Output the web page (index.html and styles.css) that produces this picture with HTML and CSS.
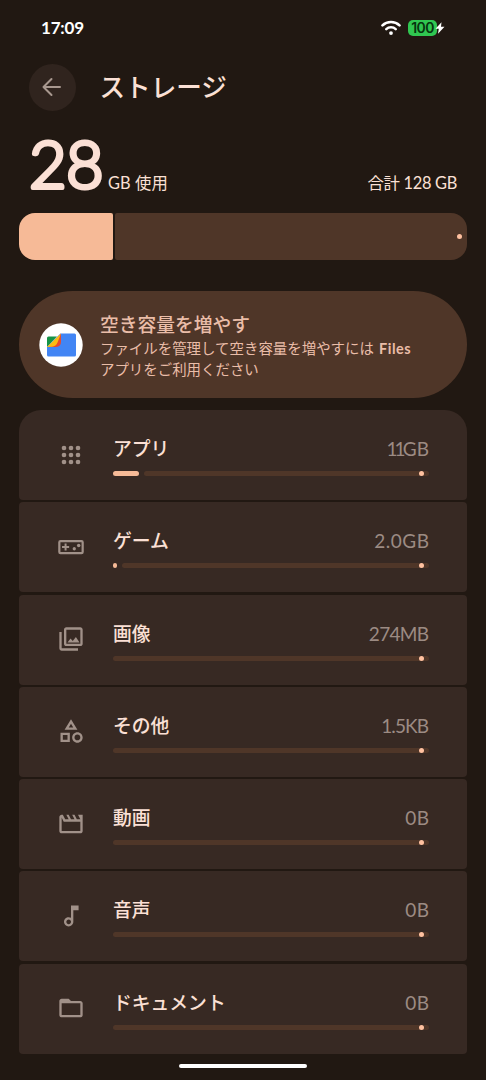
FILE: index.html
```html
<!DOCTYPE html>
<html lang="ja">
<head>
<meta charset="utf-8">
<title>ストレージ</title>
<link rel="stylesheet" href="styles.css">
</head>
<body>
<div class="status">
  <span class="clock">17:09</span>
  <svg class="wifi" viewBox="0 0 20 16" width="20" height="16"><g fill="none" stroke="#fff" stroke-width="2.6" stroke-linecap="round"><path d="M1.500 5.400C6.100.9 13.900.9 18.500 5.400"/><path d="M5.300 9.100c2.600-2.400 6.800-2.400 9.400 0"/></g><circle cx="10" cy="13.100" r="1.900" fill="#fff"/></svg>
  <span class="battery"><span class="level">100</span><svg class="bolt" viewBox="0 0 10 12" width="10" height="12"><path d="M6.500.3L.5 6.800h3.300L3 11.700l6.500-6.900H6z" fill="#fff"/></svg></span>
</div>
<header class="top">
  <span class="back"><svg viewBox="0 0 20 20" width="20" height="20" fill="none" stroke="#a8988f" stroke-width="2" stroke-linecap="round" stroke-linejoin="round"><path d="M18 10H2M9.500 2L1.500 10l8 8"/></svg></span>
  <h1>ストレージ</h1>
</header>
<section class="summary">
  <svg class="big" width="78" height="88" viewBox="0 0 78 88"><text x="0" y="69">28</text></svg><span class="used">GB 使用</span><span class="total">合計 128 GB</span>
</section>
<div class="meter"><i class="meter-fill"></i><i class="meter-rest"></i></div>
<section class="card">
  <svg class="logo" viewBox="0 0 44 44" width="44" height="44"><circle cx="22" cy="22" r="21.700" fill="#fff"/><path d="M21.500 10.500H35.500Q37 10.500 37 12V32q0 1.500-1.500 1.500H9.500Q8 33.500 8 32V24z" fill="#4285f4"/><path d="M9.500 13.500H18L8 24v-9q0-1.500 1.500-1.500z" fill="#159447"/><path d="M22 10.500v8q0 5-5 5.500H9z" fill="#e6492f"/><path d="M22 10.500l-3.500 9q-1.500 4-5.500 4.200L8 24z" fill="#fbbc12"/></svg>
  <div class="card-copy"><h2>空き容量を増やす</h2><p>ファイルを管理して空き容量を増やすには <b>Files</b><br>アプリをご利用ください</p></div>
</section>
<main class="list">
  <article class="row"><svg class="icon" viewBox="0 0 24 24"><circle cx="6" cy="6" r="2"/><circle cx="12" cy="6" r="2"/><circle cx="18" cy="6" r="2"/><circle cx="6" cy="12" r="2"/><circle cx="12" cy="12" r="2"/><circle cx="18" cy="12" r="2"/><circle cx="6" cy="18" r="2"/><circle cx="12" cy="18" r="2"/><circle cx="18" cy="18" r="2"/></svg>
    <div class="body"><div class="line"><span>アプリ</span><span class="size"><span class="tight">11</span>GB</span></div><div class="bar"><i class="fill" style="width:25.500px"></i><i class="track"></i></div></div></article>
  <article class="row"><svg class="icon" viewBox="0 0 24 24"><rect x="2" y="6.900" width="20" height="10.300" rx="1" fill="none" stroke="#a19189" stroke-width="1.900"/><path d="M6.500 9h1.700v2.200h2.200v1.700H8.200v2.200H6.500v-2.200H4.300v-1.700h2.200z"/><circle cx="14.800" cy="13.500" r="1.400"/><circle cx="18.600" cy="10.700" r="1.500"/></svg>
    <div class="body"><div class="line"><span>ゲーム</span><span class="size s-games">2.0GB</span></div><div class="bar"><i class="fill" style="width:3.500px"></i><i class="track"></i></div></div></article>
  <article class="row"><svg class="icon" viewBox="0 0 24 24"><path d="M20 4v12H8V4h12m0-2H8c-1.100 0-2 .9-2 2v12c0 1.100.9 2 2 2h12c1.100 0 2-.9 2-2V4c0-1.100-.9-2-2-2zM9 15l2.600-3.400 1.900 2.100 2.700-3.400L19.300 15zM2 6v14c0 1.100.9 2 2 2h14v-2H4V6H2z"/></svg>
    <div class="body"><div class="line"><span>画像</span><span class="size s-images">274MB</span></div><div class="bar"><i class="track"></i></div></div></article>
  <article class="row"><svg class="icon" viewBox="0 0 24 24"><path d="M12 2l-5.500 9h11L12 2zm0 3.840L13.930 9h-3.870L12 5.840zM17.500 13c-2.490 0-4.500 2.010-4.500 4.500s2.010 4.500 4.500 4.500 4.500-2.010 4.500-4.500-2.010-4.500-4.500-4.500zm0 7c-1.380 0-2.500-1.120-2.500-2.500s1.120-2.500 2.500-2.500 2.500 1.120 2.500 2.500-1.120 2.500-2.500 2.500zM3 21.500h8v-8H3v8zm2-6h4v4H5v-4z"/></svg>
    <div class="body"><div class="line"><span>その他</span><span class="size s-other">1.5KB</span></div><div class="bar"><i class="track"></i></div></div></article>
  <article class="row"><svg class="icon" viewBox="0 0 24 24"><path d="M4 6.470L5.760 10H20v8H4V6.470M22 4h-4l2 4h-3l-2-4h-2l2 4h-3l-2-4H8l2 4H7L5 4H4c-1.100 0-1.990.9-1.990 2L2 18c0 1.100.9 2 2 2h16c1.100 0 2-.9 2-2V4z"/></svg>
    <div class="body"><div class="line"><span>動画</span><span class="size s-zero">0B</span></div><div class="bar"><i class="track"></i></div></div></article>
  <article class="row"><svg class="icon" viewBox="0 0 24 24"><path d="M12 3l.01 10.550c-.59-.34-1.270-.55-2-.55C7.790 13 6 14.790 6 17s1.790 4 4.010 4S14 19.210 14 17V7h4.500V3H12zm-1.990 16c-1.100 0-2-.9-2-2s.9-2 2-2 2 .9 2 2-.9 2-2 2z"/></svg>
    <div class="body"><div class="line"><span>音声</span><span class="size s-zero">0B</span></div><div class="bar"><i class="track"></i></div></div></article>
  <article class="row"><svg class="icon" viewBox="0 0 24 24"><path d="M10 4H4c-1.100 0-2 .9-2 2v12c0 1.100.9 2 2 2h16c1.100 0 2-.9 2-2V8c0-1.100-.9-2-2-2h-8l-2-2zm10 14H4V8h16v10z" fill-rule="evenodd"/></svg>
    <div class="body"><div class="line"><span>ドキュメント</span><span class="size s-zero">0B</span></div><div class="bar"><i class="track"></i></div></div></article>
</main>
<div class="home"></div>
</body>
</html>
```
FILE: styles.css
```css
* { box-sizing: border-box; margin: 0; }
html { background: #211812; }
body {
  width: 486px; height: 1080px; overflow: hidden;
  display: flex; flex-direction: column;
  padding: 0 19px;
  background: #211812; color: #fbe0d5;
  font-family: Lato, "Noto Sans CJK JP", sans-serif;
}
i { display: block; }

.status { flex: none; height: 55px; padding: 0 22px; display: flex; align-items: center; color: #fff; }
.clock { font: 700 17px/22px Lato, sans-serif; letter-spacing: -.2px; margin-right: auto; }
.wifi { margin-right: 7px; }
.battery { display: flex; align-items: center; }
.level {
  width: 29px; height: 16px; border-radius: 5px; background: #30c751; color: #06350f;
  font: 600 14px/16px Inter, sans-serif; letter-spacing: -.6px; text-align: center;
}
.bolt { margin-left: -2px; }

.top { flex: none; height: 64px; padding: 0 9.500px; display: flex; align-items: center; gap: 24px; }
.back { width: 47px; height: 47px; border-radius: 50%; background: #30241e; display: grid; place-items: center; }
h1 { font-size: 25.600px; font-weight: 500; line-height: 38px; padding-bottom: 1px; }

.summary { flex: none; height: 94px; padding: 0 10px; display: flex; align-items: flex-start; }
.big { flex: none; margin-right: 1px; overflow: visible; }
.big text {
  font: 300 65px Lato, sans-serif; letter-spacing: -.8px;
  fill: #fbe0d5; stroke: #fbe0d5; stroke-width: 4px; stroke-linejoin: round;
}
.used, .total { font-size: 16.400px; line-height: 24px; margin-top: 52px; }
.used { letter-spacing: .1px; }
.total { margin-left: auto; letter-spacing: -.3px; }

.meter { height: 47px; flex: none; display: flex; gap: 2px; }
.meter-fill { width: 94px; background: #f6ba97; border-radius: 16px 2px 2px 16px; }
.meter-rest { flex: 1; background: #4f3628; border-radius: 2px 16px 16px 2px; display: flex; align-items: center; justify-content: flex-end; padding-right: 5px; }
.meter-rest::after { content: ""; width: 5px; height: 5px; border-radius: 50%; background: #ffc1a0; }

.card { flex: none; height: 107px; margin-top: 31px; padding-left: 20px; border-radius: 53.500px; background: #4f3628; display: flex; align-items: center; gap: 17px; color: #eabda8; }
.logo { flex: none; }
.card-copy { padding-top: 3px; }
h2 { font-size: 18.750px; line-height: 26px; font-weight: 500; margin-bottom: 1px; }
.card p { font-size: 14.450px; line-height: 20.500px; white-space: nowrap; }
.card b { font-family: Lato, sans-serif; font-weight: 700; letter-spacing: .5px; margin-left: 1.500px; }

.list { margin-top: 12px; display: flex; flex-direction: column; gap: 2.250px; }
.row { flex: none; height: 90px; border-radius: 4px; background: #372923; display: flex; padding: 0 38px 0 38px; gap: 28px; }
.row:first-child { border-radius: 22px 22px 4px 4px; }
.icon { flex: none; width: 28px; height: 28px; margin-top: 30.500px; fill: #a19189; }
.body { flex: 1; padding-top: 24px; }
.line { display: flex; justify-content: space-between; align-items: center; height: 30px; font-size: 18.800px; line-height: 30px; font-weight: 500; }
.size { font-size: 19px; font-weight: 400; color: #9c8b83; }
.tight { letter-spacing: -2.800px; }
.s-games { letter-spacing: .5px; margin-right: -.5px; }
.s-images { letter-spacing: -.7px; margin-right: .7px; }
.s-other { letter-spacing: -.9px; margin-right: .9px; }
.s-zero { letter-spacing: .5px; margin-right: -.5px; }
.bar { height: 5px; margin-top: 7px; display: flex; gap: 5px; }
.fill { background: #f6ba97; border-radius: 2.500px; }
.track { flex: 1; background: #4f3628; border-radius: 2.500px; display: flex; justify-content: flex-end; padding-right: 4.800px; }
.track::after { content: ""; width: 5px; height: 5px; border-radius: 50%; background: #ffc1a0; }

.home { flex: none; width: 128px; height: 4px; border-radius: 2px; background: #fff; margin: 10.500px auto 0; }
```
